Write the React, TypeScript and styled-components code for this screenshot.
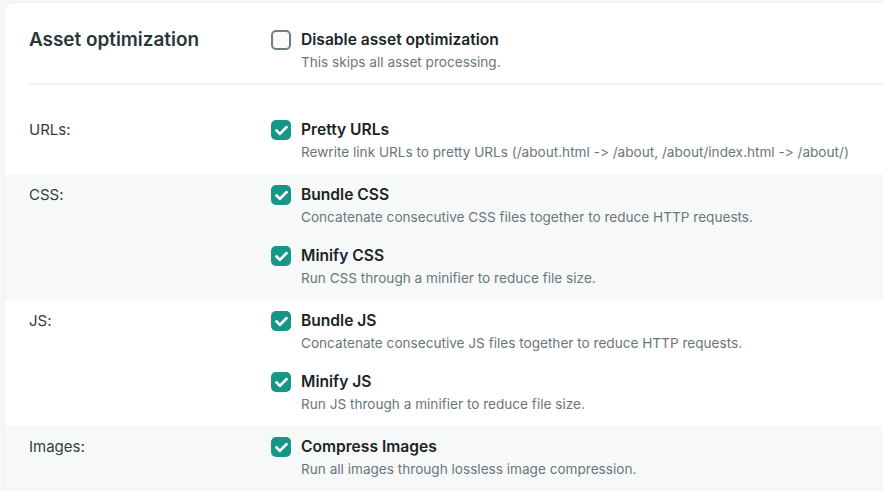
import React from "react";
import styled, { createGlobalStyle } from "styled-components";

const Global = createGlobalStyle`
  html, body { margin: 0; padding: 0; background: #f4f7f8; }
  body {
    font-family: Inter, "Noto Sans", sans-serif;
    font-feature-settings: "calt" 0, "liga" 0;
    font-variant-ligatures: none;
    -webkit-font-smoothing: antialiased;
  }
`;

const Page = styled.div`
  padding: 3px 0 0 5px;
  height: 491px;
  box-sizing: border-box;
  overflow: hidden;
`;

const Card = styled.div`
  background: #ffffff;
  border-radius: 7px 0 0 0;
  box-shadow: 0 0 0 1px #eef2f3;
  min-height: 600px;
`;

const Header = styled.div`
  display: grid;
  grid-template-columns: 242px 1fr;
  margin: 0 0 0 24px;
  padding: 27px 0 11px;
  border-bottom: 2px solid #f0f2f3;
`;

const Title = styled.h2`
  margin: 0;
  font-size: 18.9px;
  line-height: 20px;
  font-weight: 600;
  color: #2b363b;
`;

const Row = styled.div<{ $shaded?: boolean; $first?: boolean }>`
  display: grid;
  grid-template-columns: 242px 1fr;
  padding: ${(p) => (p.$first ? "35px" : "11px")} 0 12px 24px;
  background: ${(p) => (p.$shaded ? "#f7f9f9" : "#ffffff")};
`;

const RowLabel = styled.div`
  font-size: 15px;
  line-height: 20px;
  color: #323d42;
`;

const Options = styled.div`
  display: flex;
  flex-direction: column;
  gap: 19px;
`;

const Option = styled.label`
  display: grid;
  grid-template-columns: 30px 1fr;
  row-gap: 2px;
  align-items: center;
`;

const Box = styled.span<{ $checked: boolean }>`
  width: 20px;
  height: 20px;
  box-sizing: border-box;
  border-radius: 5px;
  display: flex;
  align-items: center;
  justify-content: center;
  background: ${(p) => (p.$checked ? "#169688" : "#f8f9fa")};
  border: ${(p) => (p.$checked ? "none" : "2px solid #6f7c82")};
`;

const OptionTitle = styled.span`
  font-size: 15.6px;
  line-height: 20px;
  font-weight: 600;
  color: #1b2327;
`;

const OptionDesc = styled.span`
  grid-column: 2;
  font-size: 13.6px;
  line-height: 20px;
  color: #6a767c;
`;

const Check = () => (
  <svg width="13" height="13" viewBox="0 0 512 512" aria-hidden>
    <path
      fill="#ffffff"
      d="M173.898 439.404l-166.4-166.4c-9.997-9.997-9.997-26.206 0-36.204l36.203-36.204c9.997-9.998 26.207-9.998 36.204 0L192 312.69 432.095 72.596c9.997-9.997 26.207-9.997 36.204 0l36.203 36.204c9.997 9.997 9.997 26.206 0 36.204l-294.4 294.401c-9.998 9.997-26.207 9.997-36.204-.001z"
    />
  </svg>
);

type Opt = { title: string; desc: string; checked: boolean };

const OptionItem = ({ title, desc, checked }: Opt) => (
  <Option>
    <Box $checked={checked}>{checked && <Check />}</Box>
    <OptionTitle>{title}</OptionTitle>
    <OptionDesc>{desc}</OptionDesc>
  </Option>
);

const groups: { label: string; shaded: boolean; options: Opt[] }[] = [
  {
    label: "URLs:",
    shaded: false,
    options: [
      {
        title: "Pretty URLs",
        desc: "Rewrite link URLs to pretty URLs (/about.html -> /about, /about/index.html -> /about/)",
        checked: true,
      },
    ],
  },
  {
    label: "CSS:",
    shaded: true,
    options: [
      { title: "Bundle CSS", desc: "Concatenate consecutive CSS files together to reduce HTTP requests.", checked: true },
      { title: "Minify CSS", desc: "Run CSS through a minifier to reduce file size.", checked: true },
    ],
  },
  {
    label: "JS:",
    shaded: false,
    options: [
      { title: "Bundle JS", desc: "Concatenate consecutive JS files together to reduce HTTP requests.", checked: true },
      { title: "Minify JS", desc: "Run JS through a minifier to reduce file size.", checked: true },
    ],
  },
  {
    label: "Images:",
    shaded: true,
    options: [
      { title: "Compress Images", desc: "Run all images through lossless image compression.", checked: true },
    ],
  },
];

export default function App() {
  return (
    <Page>
      <Global />
      <Card>
        <Header>
          <Title>Asset optimization</Title>
          <OptionItem
            title="Disable asset optimization"
            desc="This skips all asset processing."
            checked={false}
          />
        </Header>
        {groups.map((g, i) => (
          <Row key={g.label} $shaded={g.shaded} $first={i === 0}>
            <RowLabel>{g.label}</RowLabel>
            <Options>
              {g.options.map((o) => (
                <OptionItem key={o.title} {...o} />
              ))}
            </Options>
          </Row>
        ))}
      </Card>
    </Page>
  );
}
